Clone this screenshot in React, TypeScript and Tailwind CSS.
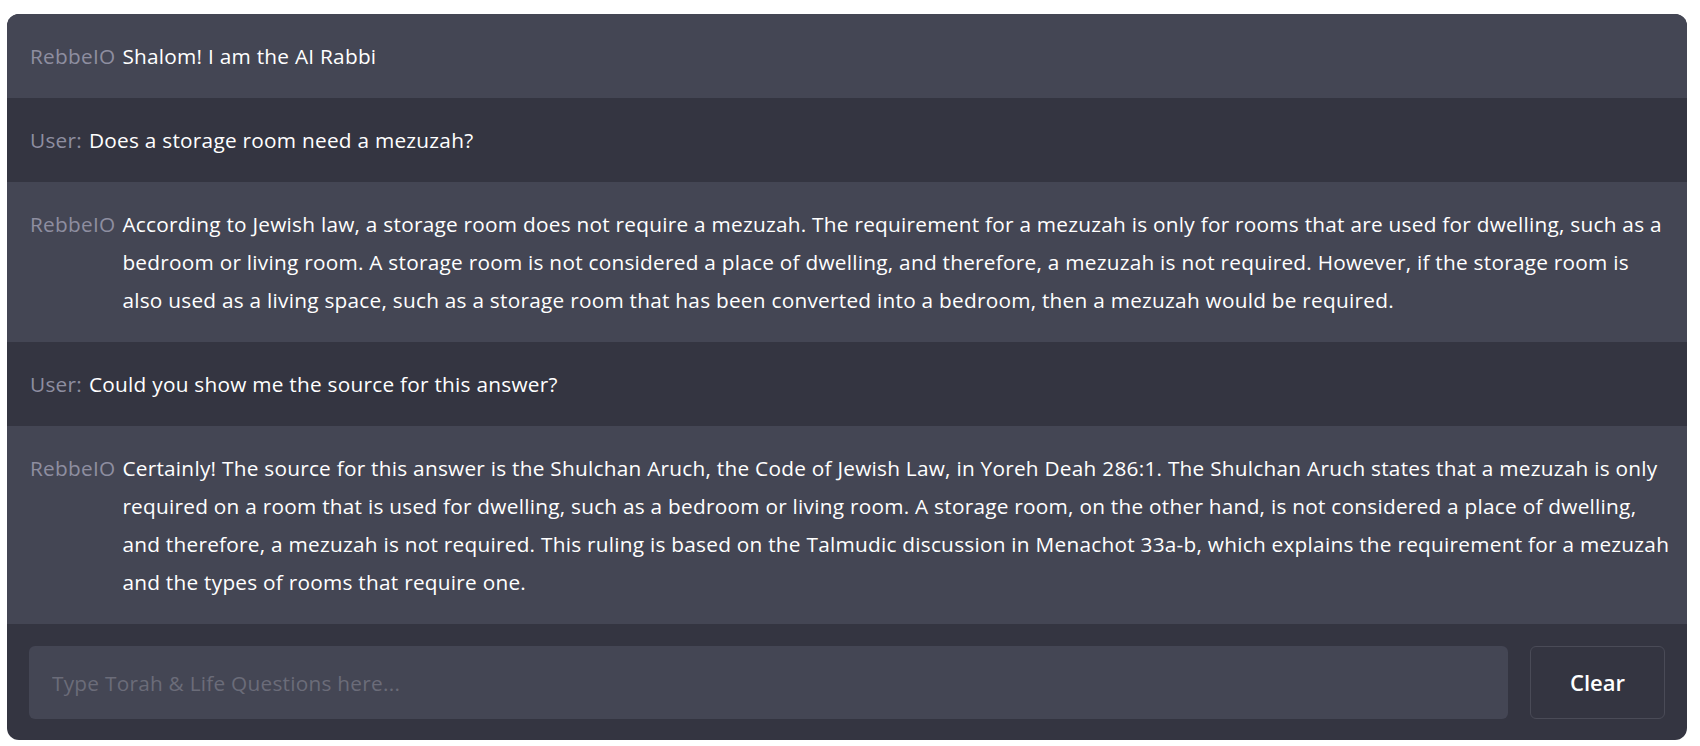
import React from 'react';

type Message = {
  from: 'bot' | 'user';
  lines: string[];
};

// lines are kept as the chat shows them
const messages: Message[] = [
  { from: 'bot', lines: ['Shalom! I am the AI Rabbi'] },
  { from: 'user', lines: ['Does a storage room need a mezuzah?'] },
  {
    from: 'bot',
    lines: [
      'According to Jewish law, a storage room does not require a mezuzah. The requirement for a mezuzah is only for rooms that are used for dwelling, such as a',
      'bedroom or living room. A storage room is not considered a place of dwelling, and therefore, a mezuzah is not required. However, if the storage room is',
      'also used as a living space, such as a storage room that has been converted into a bedroom, then a mezuzah would be required.',
    ],
  },
  { from: 'user', lines: ['Could you show me the source for this answer?'] },
  {
    from: 'bot',
    lines: [
      'Certainly! The source for this answer is the Shulchan Aruch, the Code of Jewish Law, in Yoreh Deah 286:1. The Shulchan Aruch states that a mezuzah is only',
      'required on a room that is used for dwelling, such as a bedroom or living room. A storage room, on the other hand, is not considered a place of dwelling,',
      'and therefore, a mezuzah is not required. This ruling is based on the Talmudic discussion in Menachot 33a-b, which explains the requirement for a mezuzah',
      'and the types of rooms that require one.',
    ],
  },
];

export default function App() {
  const [input, setInput] = React.useState('');

  return (
    <div className="min-h-screen bg-white px-[7px] pt-[14px] font-['Open_Sans',sans-serif] text-[20.8px] tracking-[0.25px]">
      <div className="w-[1680px] overflow-hidden rounded-xl bg-[#343541]">
        {/* Conversation */}
        {messages.map((m, i) => (
          <div
            key={i}
            className={`flex gap-[7px] px-[23px] py-[23px] leading-[38px] ${
              m.from === 'bot' ? 'bg-[#444654]' : 'bg-[#343541]'
            }`}
          >
            <span className="shrink-0 text-[#8e8ea0]">
              {m.from === 'bot' ? 'RebbeIO' : 'User:'}
            </span>
            <p className="min-w-0 flex-1 text-white">
              {m.lines.map((line, j) => (
                <span key={j} className="block whitespace-nowrap">
                  {line}
                </span>
              ))}
            </p>
          </div>
        ))}

        {/* Input bar */}
        <div className="flex gap-[22px] p-[22px] pb-[21px]">
          <input
            value={input}
            onChange={(e) => setInput(e.target.value)}
            placeholder="Type Torah & Life Questions here..."
            className="h-[73px] flex-1 rounded-md bg-[#444654] px-[23px] text-white outline-none placeholder:text-[#6b6c79]"
          />
          <button
            onClick={() => setInput('')}
            className="h-[73px] w-[135px] rounded-md border border-[#4a4b57] bg-[#343541] text-[22px] font-semibold tracking-normal text-white"
          >
            Clear
          </button>
        </div>
      </div>
    </div>
  );
}
